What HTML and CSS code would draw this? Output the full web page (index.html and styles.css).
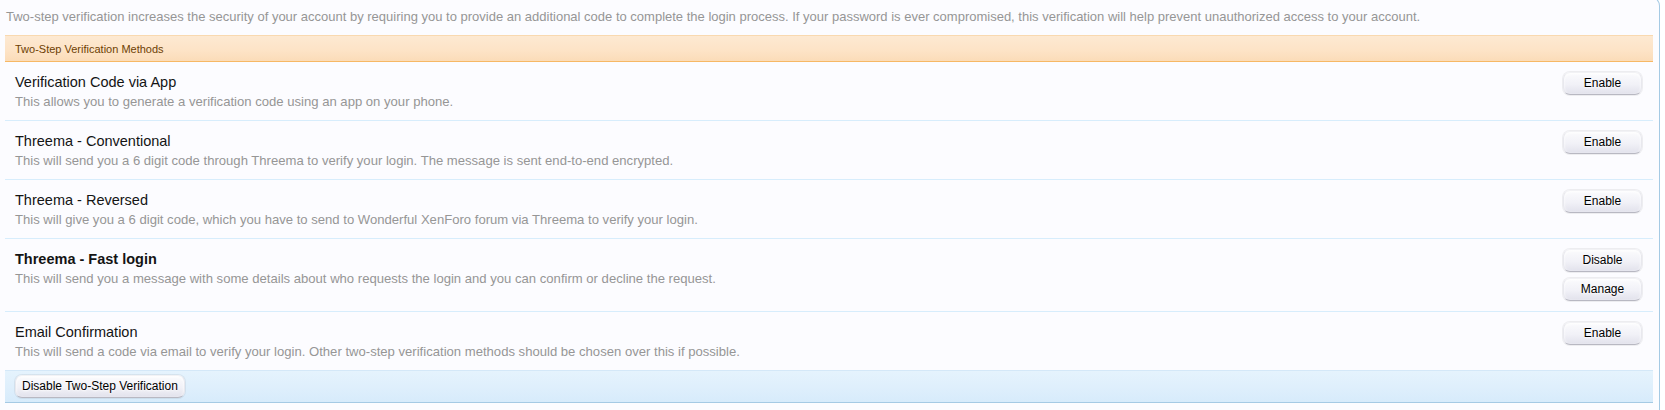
FILE: index.html
```html
<!DOCTYPE html>
<html lang="en">
<head>
<meta charset="utf-8">
<title>Two-Step Verification</title>
<link rel="stylesheet" href="styles.css">
</head>
<body>
<div class="page">
  <p class="explain">Two-step verification increases the security of your account by requiring you to provide an additional code to complete the login process. If your password is ever compromised, this verification will help prevent unauthorized access to your account.</p>
  <div class="methods">
    <h3 class="subHeading">Two-Step Verification Methods</h3>
    <ol class="methodList">
      <li class="method">
        <div class="info">
          <h4 class="title">Verification Code via App</h4>
          <p class="desc">This allows you to generate a verification code using an app on your phone.</p>
        </div>
        <div class="actions"><span class="button">Enable</span></div>
      </li>
      <li class="method">
        <div class="info">
          <h4 class="title">Threema - Conventional</h4>
          <p class="desc">This will send you a 6 digit code through Threema to verify your login. The message is sent end-to-end encrypted.</p>
        </div>
        <div class="actions"><span class="button">Enable</span></div>
      </li>
      <li class="method">
        <div class="info">
          <h4 class="title">Threema - Reversed</h4>
          <p class="desc">This will give you a 6 digit code, which you have to send to Wonderful XenForo forum via Threema to verify your login.</p>
        </div>
        <div class="actions"><span class="button">Enable</span></div>
      </li>
      <li class="method">
        <div class="info">
          <h4 class="title active">Threema - Fast login</h4>
          <p class="desc">This will send you a message with some details about who requests the login and you can confirm or decline the request.</p>
        </div>
        <div class="actions"><span class="button">Disable</span><span class="button">Manage</span></div>
      </li>
      <li class="method last">
        <div class="info">
          <h4 class="title">Email Confirmation</h4>
          <p class="desc">This will send a code via email to verify your login. Other two-step verification methods should be chosen over this if possible.</p>
        </div>
        <div class="actions"><span class="button">Enable</span></div>
      </li>
    </ol>
    <div class="sectionFooter"><span class="button wide">Disable Two-Step Verification</span></div>
  </div>
</div>
</body>
</html>
```

FILE: styles.css
```css
html, body {
  margin: 0;
  padding: 0;
  background: #ffffff;
  overflow: hidden;
}

body {
  font-family: "Liberation Sans", Arial, Helvetica, sans-serif;
  color: #141414;
}

.page {
  margin: -4px 5px 0 0;
  padding: 0 6px 20px 5px;
  background: #fcfcff;
  border: 1px solid #a5cae4;
  border-left: 0;
  border-bottom: 0;
  border-radius: 0 10px 0 0;
}

.explain {
  margin: 0;
  padding: 11px 0 0 1px;
  height: 30px;
  box-sizing: border-box;
  font-size: 13px;
  line-height: 18px;
  color: #969696;
  white-space: nowrap;
}

.methods {
  margin-top: 8px;
}

.subHeading {
  margin: 0;
  padding: 6px 10px 5px;
  font-size: 11px;
  line-height: 14px;
  font-weight: normal;
  color: #6d3f03;
  background: linear-gradient(to bottom, #fde9d2 0%, #fde3c6 60%, #fbdcb8 100%);
  border-top: 1px solid #f9d9b0;
  border-bottom: 1px solid #f7b865;
}

.methodList {
  list-style: none;
  margin: 0;
  padding: 0;
}

.method {
  display: flex;
  justify-content: space-between;
  align-items: flex-start;
  padding: 10px 11px 10px 10px;
  background: #fcfcff;
  border-bottom: 1px solid #d7edfc;
}

.method.last {
  border-bottom: 0;
}

.info {
  min-width: 0;
}

.title {
  margin: 0 0 2px;
  font-size: 14.5px;
  line-height: 20px;
  font-weight: normal;
  color: #141414;
}

.title.active {
  font-weight: bold;
}

.desc {
  margin: 0;
  font-size: 13.1px;
  line-height: 16px;
  color: #969696;
}

.actions {
  display: flex;
  flex-direction: column;
  gap: 6px;
  flex-shrink: 0;
}

.button {
  display: block;
  box-sizing: border-box;
  width: 79px;
  height: 23px;
  padding: 0 6px;
  font-family: "Liberation Sans", Arial, Helvetica, sans-serif;
  font-size: 12px;
  line-height: 21px;
  text-align: center;
  color: #000;
  background: linear-gradient(to bottom, #fbfbfd 0%, #f1f1f7 55%, #e2e2ec 100%);
  border: 1px solid #e8e8ee;
  border-top-color: #f2f2f5;
  border-bottom-color: #b8b8c2;
  border-radius: 7px;
  box-shadow: 0 0 0 1px rgba(0, 0, 0, 0.06), inset 0 1px 3px #ffffff;
  text-shadow: 0 1px 2px #ffffff;
}

.button.wide {
  width: auto;
  display: inline-block;
}

.sectionFooter {
  padding: 4px 10px;
  background: linear-gradient(to bottom, #e5f3fd 0%, #dfeffc 50%, #d7ebfb 100%);
  border-top: 1px solid #d4e8f8;
  border-bottom: 1px solid #a5cae4;
  line-height: 0;
}
```
